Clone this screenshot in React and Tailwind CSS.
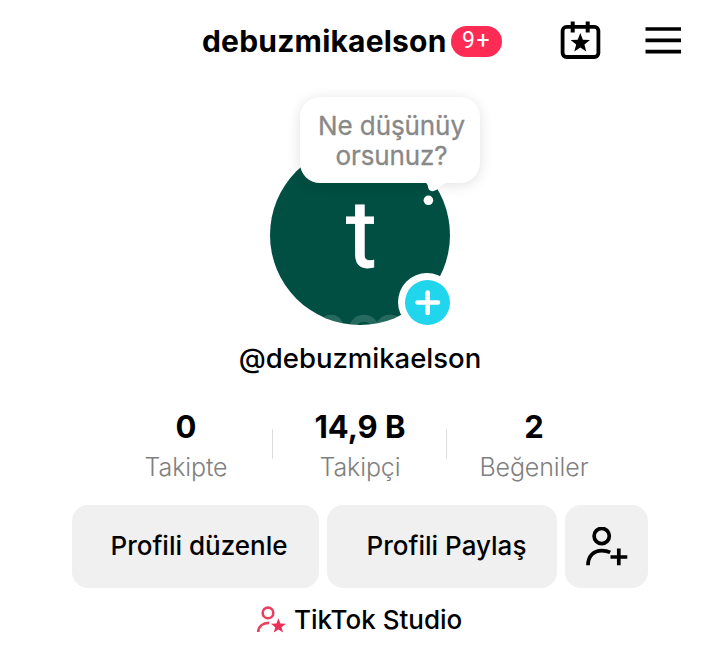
import React from 'react';

const stats = [
  { value: '0', label: 'Takipte' },
  { value: '14,9 B', label: 'Takipçi' },
  { value: '2', label: 'Beğeniler' },
];

const STAR = 'M0 -10 L2.6 -3.3 L9.7 -3 L4.1 1.5 L6 8.4 L0 4.5 L-6 8.4 L-4.1 1.5 L-9.7 -3 L-2.6 -3.3 Z';

const CalendarStarIcon = () => (
  <svg width="42" height="40" viewBox="0 0 42 40" fill="none">
    <rect x="2.6" y="5.8" width="35.8" height="30.2" rx="4" stroke="#000" strokeWidth="3.8" />
    <path d="M12.7 0.4V11.6M27.7 0.4V11.6" stroke="#000" strokeWidth="4" />
    <path d={STAR} transform="translate(20.3 22)" fill="#000" />
  </svg>
);

const MenuIcon = () => (
  <svg width="36" height="28" viewBox="0 0 36 28" fill="none">
    <path d="M0.5 2H36M0.5 13.3H36M0.5 24.6H36" stroke="#000" strokeWidth="3.7" />
  </svg>
);

const AddFriendIcon = () => (
  <svg width="42" height="40" viewBox="0 0 42 40" fill="none" stroke="#000" strokeWidth="3.7">
    <circle cx="15.7" cy="9" r="7.6" />
    <path d="M2 38.2C2 29.4 7.5 23.6 15.8 23.6C19 23.6 21.8 24.2 24.2 25.4" />
    <path d="M24.5 30H41.3M32.8 21.6V38.2" />
  </svg>
);

const StudioIcon = () => (
  <svg width="30" height="28" viewBox="0 0 30 28" fill="none">
    <circle cx="12" cy="6.9" r="5.3" stroke="#e8405f" strokeWidth="2.6" />
    <path d="M2.2 26C2.4 20.7 6.4 17.1 13.2 16.9" stroke="#e8405f" strokeWidth="2.6" />
    <path d={STAR} transform="translate(22.4 20) scale(0.77)" fill="#ee3058" />
  </svg>
);

const App = () => {
  return (
    <div className="h-[666px] w-[720px] overflow-hidden bg-white font-[Inter,sans-serif] text-black">
      {/* Header */}
      <header className="flex h-[82px] items-center pl-[202px]">
        <h1 className="w-[249px] whitespace-nowrap text-[30px] font-bold tracking-[0.2px]">debuzmikaelson</h1>
        <span className="flex h-[31px] w-[51px] items-center justify-center rounded-full bg-[#fe2c55] font-[Roboto,sans-serif] text-[23px] tracking-[1.5px] text-white">
          9+
        </span>
        <button className="ml-[58px]">
          <CalendarStarIcon />
        </button>
        <button className="ml-[43px]">
          <MenuIcon />
        </button>
      </header>

      {/* Avatar with status bubble */}
      <section className="relative mx-auto mt-[63px] h-[180px] w-[180px]">
        <div className="relative flex h-full w-full items-center justify-center overflow-hidden rounded-full bg-[#014f42]">
          <span className="pb-[2px] pl-[3px] font-[Roboto,sans-serif] text-[95px] leading-none text-white [-webkit-text-stroke:0.8px_white]">
            t
          </span>
          <svg className="absolute bottom-0 left-0" width="180" height="14" viewBox="0 0 180 14" fill="none">
            <path
              d="M51 20C51 3 71 3 71 20M82 20C82 3 106 3 106 20M108 20C108 3 132 3 132 20M144 20C144 3 162 3 162 20"
              stroke="#fff"
              strokeOpacity="0.15"
              strokeWidth="7"
            />
          </svg>
        </div>
        <div className="absolute left-[30px] top-[-48px] flex h-[86px] w-[180px] items-center justify-center rounded-[20px] bg-white pt-[2px] pl-[3px] text-center text-[26px] leading-[30px] tracking-[-0.1px] text-[#888] shadow-[0_2px_14px_rgba(0,0,0,0.12)] [-webkit-text-stroke:0.3px_#888]">
          <p>
            Ne düşünüy
            <br />
            orsunuz?
          </p>
        </div>
        <svg className="absolute left-[150px] top-[36px]" width="40" height="26" viewBox="0 0 40 26" fill="#fff">
          <path d="M4 0V1.6C7.5 2 7.5 4 8.3 7C9.3 11 14 11 17.5 8C22 3.5 24.5 1.6 32 1.6V0Z" />
          <circle cx="8.4" cy="19.3" r="4.8" />
        </svg>
        <button className="absolute left-[128px] top-[128px] flex h-[58px] w-[58px] items-center justify-center rounded-full bg-white">
          <svg width="45" height="45" viewBox="0 0 45 45">
            <circle cx="22.5" cy="22.5" r="22.5" fill="#20d5ec" />
            <path d="M12.5 22.5H33M22.7 12.5V33" stroke="#fff" strokeWidth="4.6" strokeLinecap="round" />
          </svg>
        </button>
      </section>

      <p className="mt-[14px] text-center text-[27.5px] font-medium leading-[38px]">@debuzmikaelson</p>

      {/* Stats */}
      <section className="ml-[99px] mt-[30px] flex h-[80px] w-[522px]">
        {stats.map((stat, i) => (
          <div key={stat.label} className="relative w-[174px] text-center">
            <p className="text-[31px] font-bold leading-[40px]">{stat.value}</p>
            <p className="text-[25px] font-light leading-[40px] tracking-[-0.1px] text-[#808080]">{stat.label}</p>
            {i > 0 && <span className="absolute -left-px top-[22px] h-[30px] w-px bg-[#ddd]" />}
          </div>
        ))}
      </section>

      {/* Actions */}
      <section className="mt-[18px] flex gap-2 pl-[72px]">
        <button className="h-[83px] w-[247px] rounded-[16px] bg-[#f0f0f0] pb-[2px] pl-[7px] text-[26px] font-medium">
          Profili düzenle
        </button>
        <button className="h-[83px] w-[230px] rounded-[16px] bg-[#f0f0f0] pb-[2px] pl-[9px] text-[26px] font-medium">
          Profili Paylaş
        </button>
        <button className="flex h-[83px] w-[83px] items-center justify-center rounded-[16px] bg-[#f0f0f0]">
          <AddFriendIcon />
        </button>
      </section>

      <footer className="mt-[14px] flex h-[36px] items-center pl-[256px]">
        <StudioIcon />
        <span className="ml-[8px] pb-[2px] text-[26px] font-medium">TikTok Studio</span>
      </footer>
    </div>
  );
};

export default App;
